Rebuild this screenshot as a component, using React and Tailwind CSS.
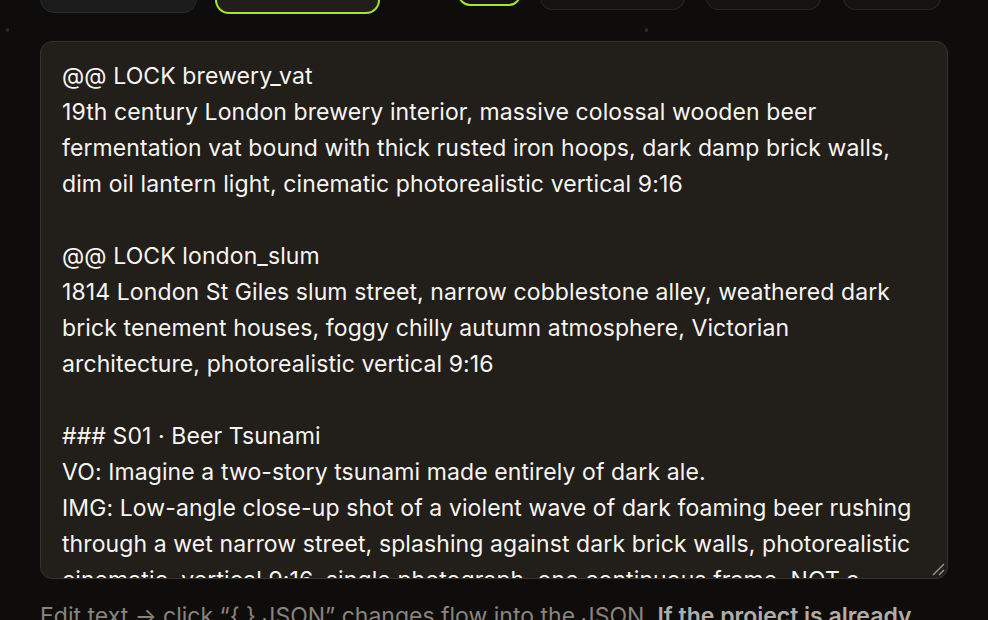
import React from "react";

const lines = [
  "@@ LOCK brewery_vat",
  "19th century London brewery interior, massive colossal wooden beer",
  "fermentation vat bound with thick rusted iron hoops, dark damp brick walls,",
  "dim oil lantern light, cinematic photorealistic vertical 9:16",
  "",
  "@@ LOCK london_slum",
  "1814 London St Giles slum street, narrow cobblestone alley, weathered dark",
  "brick tenement houses, foggy chilly autumn atmosphere, Victorian",
  "architecture, photorealistic vertical 9:16",
  "",
  "### S01 · Beer Tsunami",
  "VO: Imagine a two-story tsunami made entirely of dark ale.",
  "IMG: Low-angle close-up shot of a violent wave of dark foaming beer rushing",
  "through a wet narrow street, splashing against dark brick walls, photorealistic",
  "cinematic, vertical 9:16, single photograph, one continuous frame, NOT a",
];

const App = () => {
  return (
    <div
      className="relative h-[620px] w-[988px] overflow-hidden bg-[#0e0d0c] px-10"
      style={{ fontFamily: "Inter, 'Noto Sans', sans-serif" }}
    >
      {/* toolbar, mostly scrolled out of view */}
      <div className="-mt-[30px] flex items-start">
        <button className="h-[43px] w-[157px] rounded-[14px] border border-[#2a2a2b] bg-[#1a1b1d]"></button>
        <button className="ml-[18px] h-[44px] w-[165px] rounded-[14px] border-2 border-[#a3e635] bg-[#221e1a]"></button>
        <button className="ml-[78px] h-[36px] w-[63px] rounded-[12px] border-2 border-[#a3e635] bg-[#161412]"></button>
        <button className="ml-[19px] h-[40px] w-[145px] rounded-[12px] border border-[#2a2522] bg-[#161412]"></button>
        <button className="ml-[21px] h-[40px] w-[115px] rounded-[12px] border border-[#2a2522] bg-[#161412]"></button>
        <button className="ml-[22px] h-[40px] w-[98px] rounded-[12px] border border-[#2a2522] bg-[#161412]"></button>
      </div>

      <span className="absolute left-[6px] top-[28px] h-[4px] w-[3px] rounded-full bg-[#2e2c2a]"></span>
      <span className="absolute left-[645px] top-[28px] h-[4px] w-[3px] rounded-full bg-[#2e2c2a]"></span>

      <div className="relative mt-[27px] h-[538px] overflow-hidden rounded-[12px] border border-[#38322d] bg-[#221e1a] pl-[21px] pr-5 pt-4">
        <div className="text-[23px] leading-[36px] tracking-[0.1px] text-[#f7f5f2]">
          {lines.map((l, i) => (
            <div key={i} className="h-[36px] whitespace-nowrap">
              {l}
            </div>
          ))}
        </div>
        <svg
          className="absolute bottom-[2px] right-[2px]"
          width="14"
          height="14"
          viewBox="0 0 14 14"
        >
          <path d="M13 2 L2 13 M13 8 L8 13" stroke="#9b9690" strokeWidth="1.4" />
        </svg>
      </div>

      <p className="mt-[22px] whitespace-nowrap text-[23px] leading-[30px] text-[#8a847e]">
        Edit text → click “{"{ }"} JSON” changes flow into the JSON.{" "}
        <b className="font-semibold text-[#b3ada7]">If the project is already</b>
      </p>
    </div>
  );
};

export default App;
